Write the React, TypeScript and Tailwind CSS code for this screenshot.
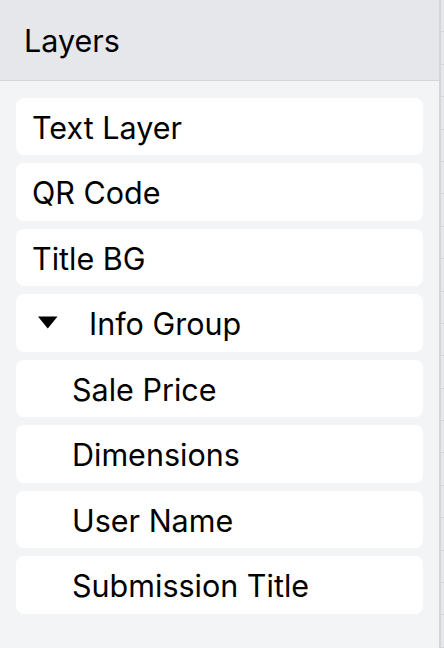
import React from 'react';

type Layer = {
  name: string;
  depth: number;
  group?: boolean;
};

const layers: Layer[] = [
  { name: 'Text Layer', depth: 0 },
  { name: 'QR Code', depth: 0 },
  { name: 'Title BG', depth: 0 },
  { name: 'Info Group', depth: 0, group: true },
  { name: 'Sale Price', depth: 1 },
  { name: 'Dimensions', depth: 1 },
  { name: 'User Name', depth: 1 },
  { name: 'Submission Title', depth: 1 },
];

const ticks = Array.from({ length: 20 }, (_, i) => i);

const LayerRow: React.FC<{ layer: Layer }> = ({ layer }) => {
  return (
    <div className="flex h-[57.5px] items-center rounded-lg bg-white pl-4 pt-[3px] text-[30.5px] leading-none text-black">
      {layer.group && (
        <svg width="20" height="13" viewBox="0 0 20 13" className="-mt-[3px] ml-[6px] mr-[31px] shrink-0">
          <path d="M0 0.5 H19.5 L9.75 12.5 Z" fill="#000" />
        </svg>
      )}
      <span className={layer.depth > 0 ? 'pl-10' : ''}>{layer.name}</span>
    </div>
  );
};

export default function App() {
  return (
    <div
      className="flex h-[648px] w-[444px] overflow-hidden bg-gray-100"
      style={{ fontFamily: 'Inter, "Noto Sans", sans-serif' }}
    >
      {/* layers panel */}
      <div className="flex w-[439px] shrink-0 flex-col">
        <div className="flex h-[81px] items-center border-b border-gray-300 bg-gray-200 pl-6 pt-[3px] text-[30.5px] leading-none text-black">
          Layers
        </div>
        <div className="flex flex-col gap-2 p-4 pt-[16.5px]">
          {layers.map((layer) => (
            <LayerRow key={layer.name} layer={layer} />
          ))}
        </div>
      </div>

      {/* edge of the next panel */}
      <div className="flex w-[5px] flex-col border-l-2 border-gray-300 bg-gray-200">
        {ticks.map((i) => (
          <div key={i} className="h-[32.4px] shrink-0 border-b border-gray-300" />
        ))}
      </div>
    </div>
  );
}
